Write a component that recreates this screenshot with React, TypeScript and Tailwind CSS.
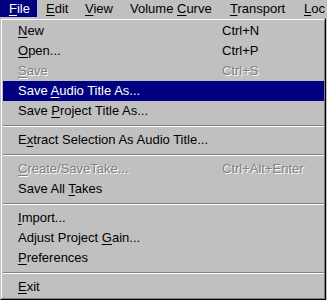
import { Fragment } from "react";

type Item =
  | { sep: true }
  | { sep?: false; pre: string; key: string; post: string; shortcut?: string; disabled?: boolean; active?: boolean };

const menuBar = [
  { pre: "", key: "F", post: "ile", width: "w-[37px]", active: true },
  { pre: "", key: "E", post: "dit", width: "w-[39px]" },
  { pre: "", key: "V", post: "iew", width: "w-[45px]" },
  { pre: "Volume ", key: "C", post: "urve", width: "w-[100px]" },
  { pre: "", key: "T", post: "ransport", width: "w-[74px]" },
  { pre: "", key: "L", post: "oc", width: "w-[40px]" },
];

const items: Item[] = [
  { pre: "", key: "N", post: "ew", shortcut: "Ctrl+N" },
  { pre: "", key: "O", post: "pen...", shortcut: "Ctrl+P" },
  { pre: "", key: "S", post: "ave", shortcut: "Ctrl+S", disabled: true },
  { pre: "Save ", key: "A", post: "udio Title As...", active: true },
  { pre: "Save ", key: "P", post: "roject Title As..." },
  { sep: true },
  { pre: "E", key: "x", post: "tract Selection As Audio Title..." },
  { sep: true },
  { pre: "", key: "C", post: "reate/SaveTake...", shortcut: "Ctrl+Alt+Enter", disabled: true },
  { pre: "Save All ", key: "T", post: "akes" },
  { sep: true },
  { pre: "", key: "I", post: "mport..." },
  { pre: "Adjust Project ", key: "G", post: "ain..." },
  { pre: "", key: "P", post: "references" },
  { sep: true },
  { pre: "", key: "E", post: "xit" },
];

function Label({ pre, k, post }: { pre: string; k: string; post: string }) {
  return (
    <>
      {pre}
      <u className="underline underline-offset-2 decoration-1">{k}</u>
      {post}
    </>
  );
}

export default function App() {
  return (
    <div
      className="w-[327px] h-[300px] overflow-hidden bg-[#c0c0c0] text-[13px] text-black"
      style={{ fontFamily: '"Liberation Sans", Arial, sans-serif' }}
    >
      {/* menu bar */}
      <div className="flex h-[18px] whitespace-nowrap">
        {menuBar.map((m, i) => (
          <div
            key={i}
            className={`${m.width} shrink-0 h-[17px] leading-[17px] pl-[9px] ${
              m.active ? "bg-[#000080] text-white" : ""
            }`}
          >
            <Label pre={m.pre} k={m.key} post={m.post} />
          </div>
        ))}
      </div>

      {/* dropdown */}
      <div className="w-[326px] border-t border-l border-[#c0c0c0] border-r-black border-b-black border-r border-b">
        <div className="border-t border-l border-white border-r border-b border-r-[#808080] border-b-[#808080] p-[1px] pr-0">
          {items.map((it, i) => {
            if (it.sep) {
              return (
                <div key={i} className="h-[9px] pt-[4px]">
                  <div className="border-t border-[#808080] border-b border-b-white" />
                </div>
              );
            }
            const color = it.active
              ? "bg-[#000080] text-white"
              : it.disabled
              ? "text-[#808080] [text-shadow:1px_1px_0_#ffffff]"
              : "";
            return (
              <Fragment key={i}>
                <div className={`flex h-[20px] leading-[20px] whitespace-nowrap ${color}`}>
                  <div className="w-[219px] shrink-0 pl-[15px]">
                    <Label pre={it.pre} k={it.key} post={it.post} />
                  </div>
                  {it.shortcut && <div>{it.shortcut}</div>}
                </div>
              </Fragment>
            );
          })}
        </div>
      </div>
    </div>
  );
}
